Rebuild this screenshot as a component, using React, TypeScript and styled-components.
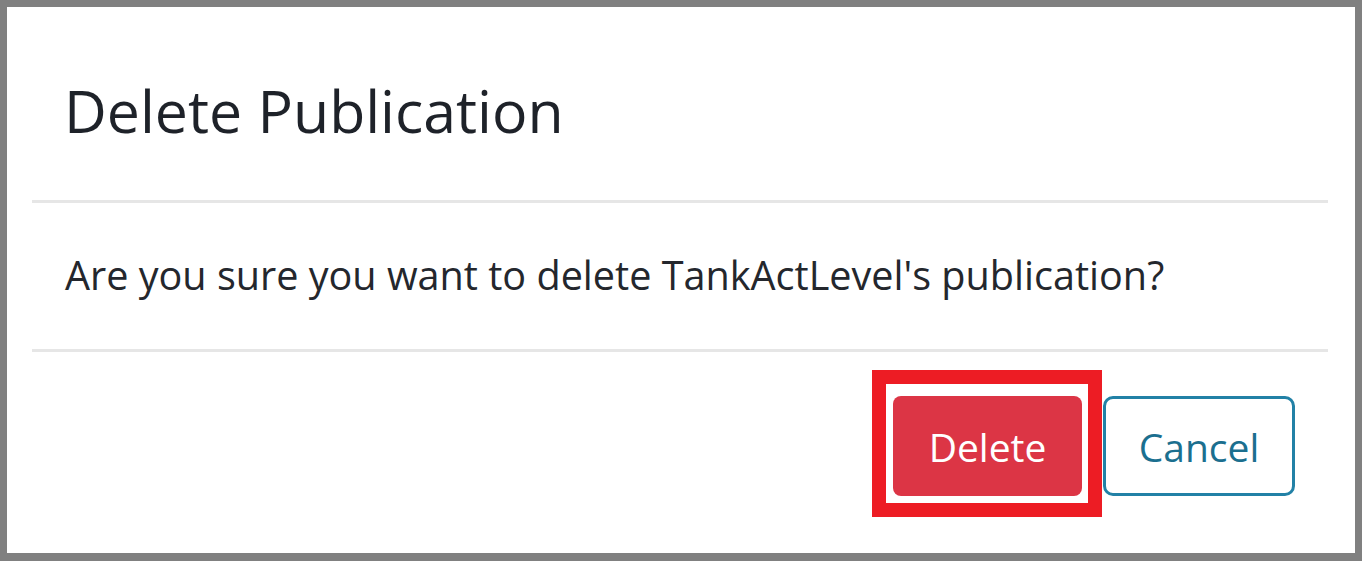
import React from "react";
import styled, { createGlobalStyle } from "styled-components";

const GlobalStyle = createGlobalStyle`
  html, body { margin: 0; padding: 0; background: #ffffff; }
  * { box-sizing: border-box; }
`;

const Frame = styled.div`
  width: 1362px;
  height: 561px;
  border: 7px solid #808080;
  border-bottom-width: 8px;
  background: #ffffff;
  padding: 0 27px 0 25px;
  font-family: "Open Sans", "Noto Sans", sans-serif;
  color: #1f232b;
`;

const Dialog = styled.div`
  display: flex;
  flex-direction: column;
`;

const Header = styled.div`
  padding: 68px 33px 55px 32px;
  border-bottom: 3px solid #e6e6e6;
`;

const Title = styled.h5`
  margin: 0;
  font-size: 59px;
  font-weight: 400;
  line-height: 70px;
  color: #1e2229;
`;

const Body = styled.div`
  padding: 48px 33px 50px 33px;
  border-bottom: 3px solid #e6e6e6;
`;

const Message = styled.p`
  margin: 0;
  font-size: 39.6px;
  line-height: 48px;
  color: #24272d;
`;

const Footer = styled.div`
  display: flex;
  justify-content: flex-end;
  align-items: center;
  gap: 21px;
  padding: 44px 33px 0 33px;
`;

const Highlight = styled.div`
  position: relative;
  display: flex;
  &::after {
    content: "";
    position: absolute;
    top: -26px;
    left: -21px;
    right: -20px;
    bottom: -21px;
    border: 14px solid #ed1c24;
    pointer-events: none;
  }
`;

const Button = styled.button<{ $variant: "danger" | "outline" }>`
  height: 100px;
  width: ${(p) => (p.$variant === "danger" ? "189px" : "192px")};
  border-radius: ${(p) => (p.$variant === "danger" ? "8px" : "10px")};
  font-family: "Open Sans", "Noto Sans", sans-serif;
  font-size: 39px;
  font-weight: 400;
  line-height: 1;
  padding: 0;
  cursor: pointer;
  background: ${(p) => (p.$variant === "danger" ? "#dc3545" : "#ffffff")};
  color: ${(p) => (p.$variant === "danger" ? "#ffffff" : "#1b6f8f")};
  border: ${(p) =>
    p.$variant === "danger" ? "none" : "3px solid #2281a6"};
`;

export default function App() {
  return (
    <>
      <GlobalStyle />
      <Frame>
        <Dialog>
          <Header>
            <Title>Delete Publication</Title>
          </Header>
          <Body>
            <Message>
              Are you sure you want to delete TankActLevel's publication?
            </Message>
          </Body>
          <Footer>
            <Highlight>
              <Button $variant="danger">Delete</Button>
            </Highlight>
            <Button $variant="outline">Cancel</Button>
          </Footer>
        </Dialog>
      </Frame>
    </>
  );
}
